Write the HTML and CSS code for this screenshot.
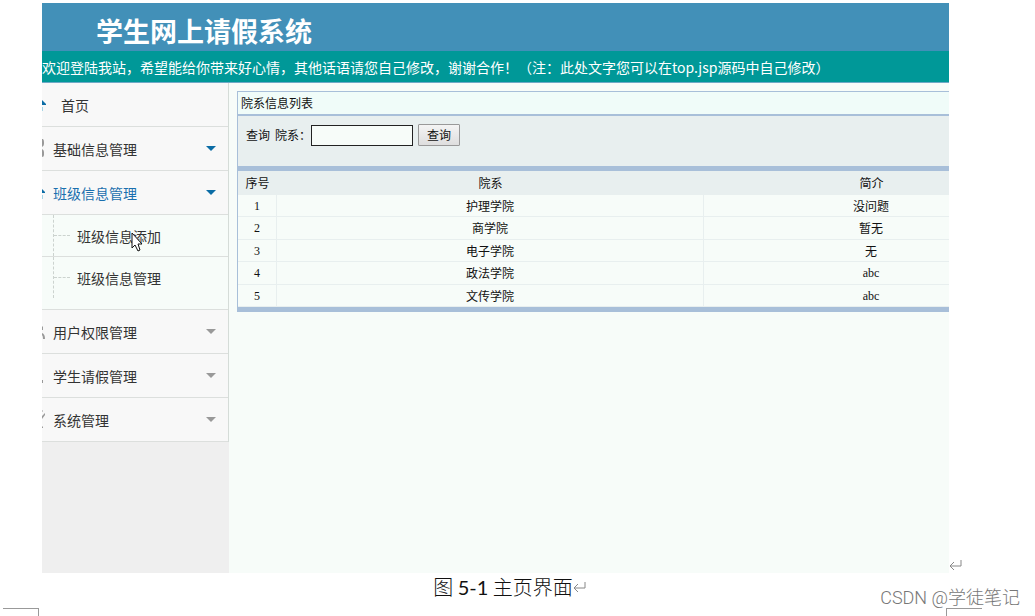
FILE: index.html
```html
<!DOCTYPE html>
<html lang="zh-CN">
<head>
<meta charset="utf-8">
<title>学生网上请假系统</title>
<link rel="stylesheet" href="styles.css">
</head>
<body>
<figure class="sheet">
  <div class="frame">
    <div class="app">
      <header>
        <h1 class="brand">学生网上请假系统</h1>
        <p class="notice">欢迎登陆我站，希望能给你带来好心情，其他话语请您自己修改，谢谢合作！（注：此处文字您可以在top.jsp源码中自己修改）</p>
      </header>
      <div class="body">
        <nav class="side">
          <ul class="menu">
            <li><a class="item home" href="#"><svg class="icon blue" viewBox="0 0 4 20"><path d="M0 5L4 9V10H0Z"/><path class="pale" d="M0 12H1V16H0Z"/></svg><span>首页</span></a></li>
            <li><a class="item" href="#"><svg class="icon" viewBox="0 0 4 20"><path d="M0 0H1Q2 1 2 3V5Q2 7 0 8ZM0 10Q2 11 2 13V16Q2 18 0 18Z"/></svg><span>基础信息管理</span><i class="arrow on"></i></a></li>
            <li><a class="item active" href="#"><svg class="icon blue" viewBox="0 0 4 20"><path d="M0 6L3 9V10H0Z"/><path class="pale" d="M0 12H1V16H0Z"/></svg><span>班级信息管理</span><i class="arrow on"></i></a>
              <ul class="sub">
                <li><a href="#">班级信息添加</a></li>
                <li><a href="#">班级信息管理</a></li>
              </ul>
            </li>
            <li><a class="item" href="#"><svg class="icon" viewBox="0 0 4 20"><path d="M0 4L1 5V8H0ZM0 11Q3 12 3 17H1Q1 14 0 13Z"/></svg><span>用户权限管理</span><i class="arrow"></i></a></li>
            <li><a class="item" href="#"><svg class="icon" viewBox="0 0 4 20"><path d="M0 14H1V17H0Z"/></svg><span>学生请假管理</span><i class="arrow"></i></a></li>
            <li><a class="item" href="#"><svg class="icon" viewBox="0 0 4 20"><path d="M0 0L1 1L0 2ZM0 6L3 3V5L0 9ZM0 16L1 17V18H0Z"/></svg><span>系统管理</span><i class="arrow"></i></a></li>
          </ul>
          <svg class="cursor" viewBox="0 0 12 20"><path d="M1 1V16L4 13L7 19L9 18L7 12H11Z"/></svg>
        </nav>
        <main class="main">
          <section class="panel">
            <h2 class="panel-title">院系信息列表</h2>
            <form class="search">
              <span>查询</span>
              <label for="dept">院系：</label>
              <input id="dept" type="text">
              <button type="button">查询</button>
            </form>
            <table class="list">
              <thead><tr><th class="no">序号</th><th class="dept">院系</th><th>简介</th></tr></thead>
              <tbody>
                <tr><td class="latin">1</td><td>护理学院</td><td>没问题</td></tr>
                <tr><td class="latin">2</td><td>商学院</td><td>暂无</td></tr>
                <tr><td class="latin">3</td><td>电子学院</td><td>无</td></tr>
                <tr><td class="latin">4</td><td>政法学院</td><td class="latin">abc</td></tr>
                <tr><td class="latin">5</td><td>文传学院</td><td class="latin">abc</td></tr>
              </tbody>
            </table>
          </section>
        </main>
      </div>
    </div>
    <svg class="mark frame-mark" viewBox="0 0 13 12"><path d="M12 1V7H1M5 3L1 7L5 11"/></svg>
  </div>
  <figcaption class="caption"><span>图 <span class="num">5-1</span> 主页界面</span><svg class="mark" viewBox="0 0 13 12"><path d="M12 1V7H1M5 3L1 7L5 11"/></svg></figcaption>
  <span class="corner left"></span>
  <span class="corner right"></span>
  <span class="watermark">CSDN @学徒笔记</span>
</figure>
</body>
</html>
```

FILE: styles.css
```css
* { box-sizing: border-box; }

body {
  margin: 0;
  background: #fff;
  color: #333;
  font-family: "Liberation Sans", "Noto Sans CJK SC", sans-serif;
}

h1, h2, p, ul, figure { margin: 0; }
ul { padding: 0; list-style: none; }
a { color: inherit; text-decoration: none; }

.sheet {
  position: relative;
  display: flex;
  flex-direction: column;
  min-height: 100vh;
  overflow: hidden;
}

.frame {
  position: relative;
  display: flex;
  flex: 1;
  padding: 3px 86px 0 42px;
}

.app {
  display: flex;
  flex: 1;
  flex-direction: column;
  min-width: 0;
  overflow: hidden;
  background: #f7fcf9;
}

.brand {
  padding: 8px 54px 0;
  height: 48px;
  background: #4290b8;
  color: #fff;
  font: bold 27px/40px "Noto Sans CJK SC", sans-serif;
}

.notice {
  height: 32px;
  border-bottom: 1px solid #6fa9c6;
  background: #009898;
  color: #fff;
  font: 14px/33px "Noto Sans CJK SC", sans-serif;
  white-space: nowrap;
}

.body {
  display: flex;
  flex: 1;
}

.side {
  position: relative;
  flex: none;
  width: 187px;
  background: #efefef;
  font: 14px/20px "Noto Sans CJK SC", sans-serif;
}

.menu { border-right: 1px solid #d5dcd8; }

.item {
  display: flex;
  align-items: center;
  gap: 7px;
  height: 44px;
  padding-right: 12px;
  border-bottom: 1px solid #dcdfdd;
  background: #f8f8f8;
}

.home { gap: 15px; }
.active { color: #1a6fae; }

.icon {
  width: 4px;
  height: 20px;
  fill: #999;
}

.icon.blue { fill: #0b6ca5; }
.icon .pale { fill: #a5d5e5; }

.arrow {
  margin-left: auto;
  border: 5px solid transparent;
  border-top-color: #999;
  border-bottom: 0;
}

.arrow.on { border-top-color: #0b6ca5; }

.sub {
  padding-bottom: 11px;
  border-bottom: 1px solid #dcdfdd;
  background: #f7fcf9;
}

.sub a {
  display: flex;
  align-items: center;
  gap: 7px;
  height: 41px;
  margin-left: 11px;
  border-left: 1px dashed #ccd3cf;
}

.sub a::before {
  width: 16px;
  border-top: 1px dashed #ccd3cf;
  content: "";
}

.sub li:first-child { border-bottom: 1px solid #dcdfdd; }

.cursor {
  position: absolute;
  left: 89px;
  top: 149px;
  width: 12px;
  height: 20px;
  fill: #fff;
  stroke: #111;
}

.main {
  flex: 1;
  min-width: 0;
  padding: 8px 0 0 8px;
}

/* The list is wider than the visible content area. */
.panel {
  margin-right: -91px;
  border: 1px solid #a8bfd9;
  border-bottom-width: 5px;
  color: #111;
  font: 12px/16px "Noto Sans CJK SC", sans-serif;
}

.panel-title {
  padding: 3px;
  height: 24px;
  border-bottom: 2px solid #a8bfd9;
  background: #f0fcf9;
  font: inherit;
}

.search {
  display: flex;
  align-items: flex-start;
  gap: 5px;
  padding: 8px;
  height: 55px;
  border-bottom: 5px solid #a8bfd9;
  background: #e8efef;
  line-height: 22px;
}

.search label { margin-right: -5px; }

.search input {
  width: 102px;
  height: 21px;
  margin-top: 1px;
  padding: 0 3px;
  border: 1px solid #222;
  background: #f7fcf9;
  font: inherit;
}

.search button {
  width: 42px;
  height: 22px;
  padding: 0;
  border: 1px solid #999;
  border-radius: 1px;
  background: linear-gradient(#f4f4f4, #dedede);
  color: #111;
  font: inherit;
  line-height: 18px;
}

.list {
  width: 100%;
  table-layout: fixed;
  border-collapse: separate;
  border-spacing: 0;
  text-align: center;
}

.list th {
  height: 24px;
  padding: 0;
  background: #e8efef;
  font-weight: normal;
}

.list td {
  height: 22px;
  padding: 0;
  border-right: 1px solid #e8efef;
  border-bottom: 1px solid #e8efef;
}

.list tr:nth-child(even) td { height: 23px; }
.list .no { width: 39px; }
.list .dept { width: 427px; }
.list .latin { font-family: "Liberation Serif", serif; }

.caption {
  display: flex;
  justify-content: center;
  padding: 0 16px 15px 0;
  color: #111;
  font: 300 20px/28px "Noto Sans CJK SC", sans-serif;
}

.num { font-family: Lato, sans-serif; font-weight: 400; }

.mark {
  align-self: center;
  width: 13px;
  height: 12px;
  fill: none;
  stroke: #888;
}

.frame-mark {
  position: absolute;
  right: 73px;
  bottom: 2px;
}

.corner {
  position: absolute;
  bottom: 0;
  width: 36px;
  height: 8px;
  border-top: 1px solid #999;
}

.corner.left { left: 3px; border-right: 1px solid #999; }
.corner.right { right: 53px; border-left: 1px solid #999; }

.watermark {
  position: absolute;
  right: 15px;
  bottom: 6px;
  color: #777;
  font: 300 18px/24px "Open Sans", "Noto Sans CJK SC", sans-serif;
  font-family: Roboto, "Noto Sans CJK SC", sans-serif;
}
```
